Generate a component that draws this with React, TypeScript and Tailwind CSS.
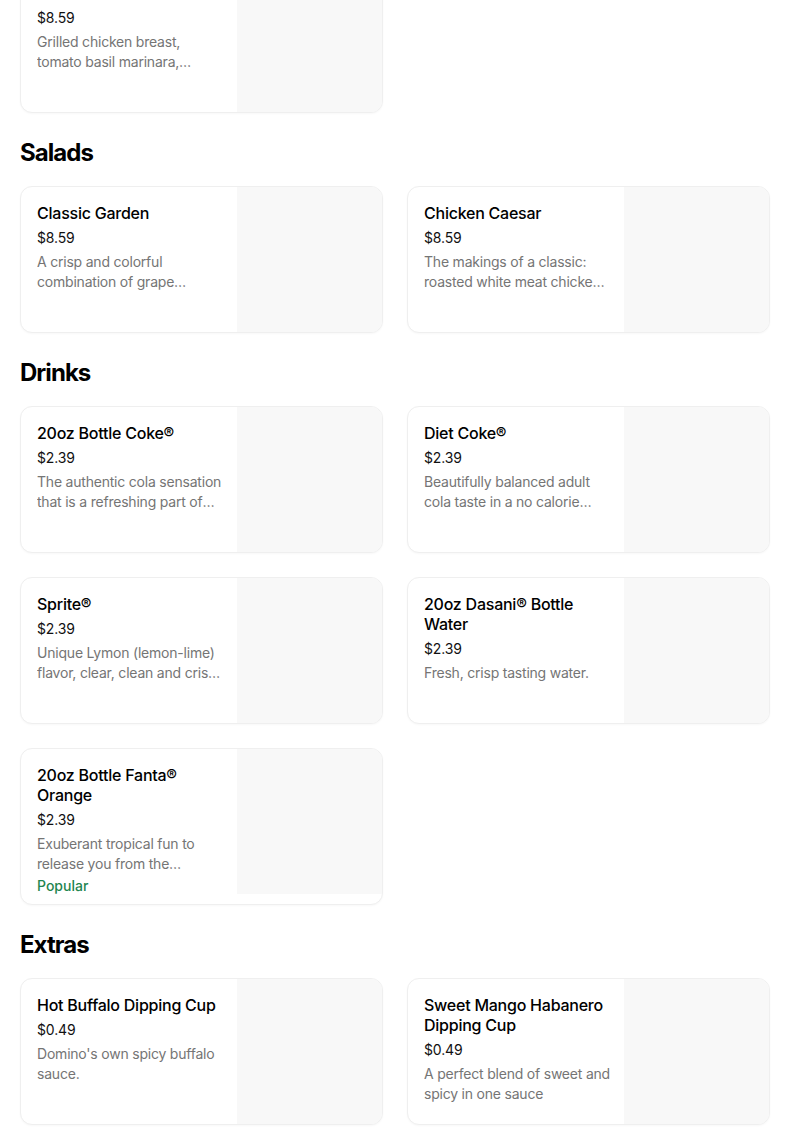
import React from 'react';

type Item = {
  name: string;
  price: string;
  description: string;
  popular?: boolean;
};

type Section = {
  title?: string;
  items: Item[];
};

const sections: Section[] = [
  {
    items: [
      {
        name: 'Chicken Parm Sub',
        price: '$8.59',
        description:
          'Grilled chicken breast, tomato basil marinara, melted mozzarella and provolone cheese on artisan bread.',
      },
    ],
  },
  {
    title: 'Salads',
    items: [
      {
        name: 'Classic Garden',
        price: '$8.59',
        description:
          'A crisp and colorful combination of grape tomatoes, red onion, carrots, red cabbage and cheddar cheese on a fresh blend of lettuce.',
      },
      {
        name: 'Chicken Caesar',
        price: '$8.59',
        description:
          'The makings of a classic: roasted white meat chicken, Parmesan cheese and croutons on a blend of romaine lettuce.',
      },
    ],
  },
  {
    title: 'Drinks',
    items: [
      {
        name: '20oz Bottle Coke®',
        price: '$2.39',
        description:
          "The authentic cola sensation that is a refreshing part of sharing life's enjoyable moments.",
      },
      {
        name: 'Diet Coke®',
        price: '$2.39',
        description: 'Beautifully balanced adult cola taste in a no calorie beverage.',
      },
      {
        name: 'Sprite®',
        price: '$2.39',
        description: 'Unique Lymon (lemon-lime) flavor, clear, clean and crisp with no caffeine.',
      },
      {
        name: '20oz Dasani® Bottle Water',
        price: '$2.39',
        description: 'Fresh, crisp tasting water.',
      },
      {
        name: '20oz Bottle Fanta® Orange',
        price: '$2.39',
        description:
          'Exuberant tropical fun to release you from the ordinary with a burst of orange flavor.',
        popular: true,
      },
    ],
  },
  {
    title: 'Extras',
    items: [
      {
        name: 'Hot Buffalo Dipping Cup',
        price: '$0.49',
        description: "Domino's own spicy buffalo sauce.",
      },
      {
        name: 'Sweet Mango Habanero Dipping Cup',
        price: '$0.49',
        description: 'A perfect blend of sweet and spicy in one sauce',
      },
    ],
  },
];

const MenuCard = ({ item }: { item: Item }) => (
  <div className="grid grid-cols-[1fr_145px] overflow-hidden rounded-xl border border-[#efefef] bg-white shadow-[0_1px_2px_rgba(0,0,0,0.03)]">
    <div className={`min-w-0 pl-4 pr-3 pt-4 ${item.popular ? 'pb-2' : 'pb-4'}`}>
      <div className="text-[16px] leading-5 font-medium tracking-[-0.015em] text-black">
        {item.name}
      </div>
      <div className="mt-[5px] text-[14px] leading-5 tracking-[-0.01em] text-[#111111]">
        {item.price}
      </div>
      <div className="mt-1 line-clamp-2 text-[14px] leading-5 tracking-[-0.015em] text-[#757575]">
        {item.description}
      </div>
      {item.popular && (
        <div className="mt-[2px] text-[14px] leading-5 font-medium text-[#1f8650]">Popular</div>
      )}
    </div>
    <div className="h-[145px] self-start bg-[#f8f8f8]" />
  </div>
);

export default function App() {
  return (
    <div
      className="min-h-screen bg-white"
      style={{ fontFamily: 'Inter, "Noto Sans", sans-serif' }}
    >
      <div className="ml-5 w-[750px] -mt-[34px] pb-6">
        {sections.map((section, i) => (
          <section key={i}>
            {section.title && (
              <h2 className="mt-6 mb-[17px] text-[24px] leading-8 font-bold tracking-[-0.04em] text-black">
                {section.title}
              </h2>
            )}
            <div className="grid grid-cols-2 gap-6">
              {section.items.map((item) => (
                <MenuCard key={item.name} item={item} />
              ))}
            </div>
          </section>
        ))}
      </div>
    </div>
  );
}
